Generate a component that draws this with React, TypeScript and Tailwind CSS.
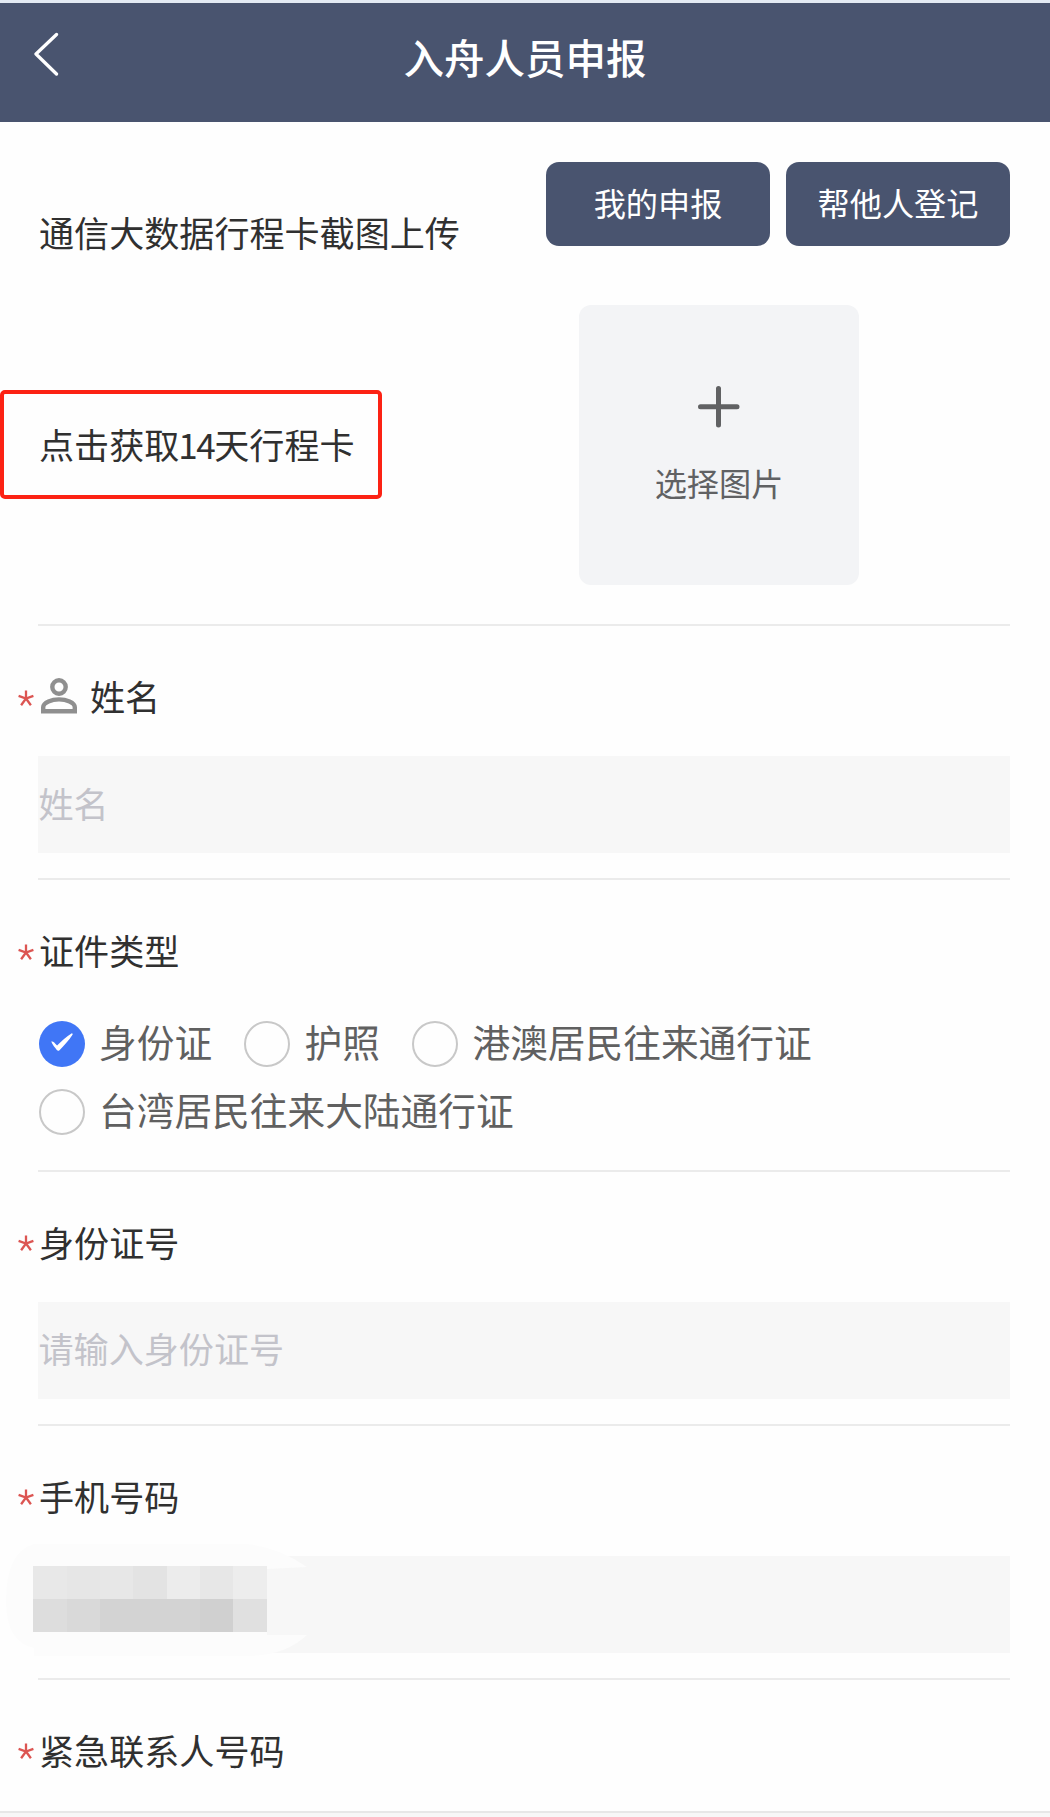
import type { ReactNode } from 'react';

const MOSAIC = [
  ['#e8e8e8', '#e6e6e6', '#e7e7e7', '#e3e3e3', '#ececec', '#e7e7e7', '#ededed'],
  ['#dddddd', '#d9d9d9', '#d3d3d3', '#d3d3d3', '#d3d3d3', '#d0d0d0', '#e0e0e0'],
];

function Label({ children, icon }: { children: ReactNode; icon?: ReactNode }) {
  return (
    <div className="flex h-[50px] items-center">
      <svg className="ml-[18px] mr-[5px] shrink-0" width="16" height="17" viewBox="0 0 16 17" fill="none" stroke="#dc5552" strokeWidth="2.3">
        <path d="M8 .5V8.5M.6 5.8 8 8.5l7.4-2.7M8 8.5 3.1 15.2M8 8.5l4.9 6.7" />
      </svg>
      {icon}
      <span className="-mt-[4px] text-[35.1px] leading-[50px] text-[#303030]">{children}</span>
    </div>
  );
}

function PersonIcon() {
  return (
    <svg className="-mt-[5px] ml-[2px] mr-[13px] shrink-0" width="36" height="36" viewBox="0 0 36 36" fill="none" stroke="#8f8f8f" strokeWidth="4.4">
      <circle cx="18" cy="9" r="6.7" />
      <path d="M2.2 33.3v-4c0-5.1 8.800-7.900 15.800-7.900s15.800 2.800 15.800 7.900v4z" />
    </svg>
  );
}

function Divider() {
  return <div className="ml-[38px] mr-[40px] h-[2px] shrink-0 bg-[#ebebeb]" />;
}

function Field({ label, icon, placeholder, children }: { label: string; icon?: ReactNode; placeholder?: string; children?: ReactNode }) {
  return (
    <section className="h-[254px] pt-[47px]">
      <Label icon={icon}>{label}</Label>
      <div className="relative ml-[38px] mr-[40px] mt-[33px] flex h-[97px] items-center bg-[#f7f7f7]">
        <span className="-mt-[4px] ml-[0.5px] text-[35.1px] leading-[50px] text-[#c3c3ca]">{placeholder}</span>
        {children}
      </div>
      <div className="h-[25px]" />
      <Divider />
    </section>
  );
}

function Radio({ label, checked }: { label: string; checked?: boolean }) {
  return (
    <div className="flex h-[46px] items-center">
      {checked ? (
        <svg width="46" height="46" viewBox="0 0 46 46">
          <circle cx="23" cy="23" r="23" fill="#4076f6" />
          <path d="M12.2 20.6c1.500-.8 3.200.6 5.900 4 4.400-4.300 9.200-9 14.700-12.300.9.2 1.100.7.700 1.500-3.800 5.700-8.200 10.600-13 15.400-.9.8-1.900.7-2.700-.2-2-2.300-4-4.900-5.600-8.400z" fill="#fff" />
        </svg>
      ) : (
        <span className="size-[46px] rounded-full border-[2.5px] border-[#c8c8c8]" />
      )}
      <span className="-mt-[6px] ml-[14.500px] text-[37.7px] leading-[46px] text-[#606060]">{label}</span>
    </div>
  );
}

function MaskedNumber() {
  return (
    <>
      <svg className="absolute -left-[33px] -top-[12px]" width="302" height="114" viewBox="0 0 302 114">
        <path d="M29 0H242Q275 4 302 23L262 25V91L302 91Q280 112 242 112H29V104Q1 98 1 57Q1 8 29 0Z" fill="#fcfcfc" />
      </svg>
      <div className="absolute -left-[4.700px] top-[10px] grid grid-cols-[repeat(7,33.33px)] grid-rows-[repeat(2,33.33px)]">
        {MOSAIC.flat().map((color, i) => (
          <span key={i} style={{ backgroundColor: color }} />
        ))}
      </div>
    </>
  );
}

export default function App() {
  return (
    <div className="flex h-[1817px] w-[1050px] flex-col overflow-hidden bg-[#fefefe] font-['Noto_Sans_CJK_SC',sans-serif]">
      <div className="h-[3px] shrink-0 bg-[#e3eaf3]" />
      <header className="grid h-[118.5px] shrink-0 grid-cols-[80px_1fr_80px] bg-[#49546f]">
        <svg className="ml-[34px] mt-[29px]" width="26" height="44" viewBox="0 0 26 44" fill="none" stroke="#fff" strokeWidth="3.3" strokeLinecap="round" strokeLinejoin="round">
          <path d="M22.5 2.5 2 22l20.5 20" />
        </svg>
        <h1 className="mt-[24px] text-center text-[40.5px] font-medium leading-[60px] text-white">入舟人员申报</h1>
      </header>

      <section className="h-[502.5px] shrink-0">
        <div className="flex h-[183.5px] pl-[39px] pr-[40px] pt-[40.5px]">
          <div className="mt-[45px] flex-1 text-[35.1px] leading-[50px] text-[#303030]">通信大数据行程卡截图上传</div>
          <div className="flex gap-[16px] text-[32.2px] leading-[80px] text-white">
            <button className="h-[84px] w-[224px] rounded-[13px] bg-[#49546f] pb-1">我的申报</button>
            <button className="h-[84px] w-[224px] rounded-[13px] bg-[#49546f] pb-1">帮他人登记</button>
          </div>
        </div>
        <div className="flex items-center">
          <div className="-mt-[2px] flex h-[109px] w-[382px] items-center rounded-[5px] border-[4.5px] border-[#fc2214] pl-[35px] text-[35.1px] leading-[50px] text-[#303030]">
            点击获取<span className="-ml-px tracking-[-1.5px]">14</span>天行程卡
          </div>
          <div className="ml-[197px] flex size-[280px] flex-col items-center rounded-[12px] bg-[#f3f4f6] pt-[80.500px]">
            <svg width="42" height="42" viewBox="0 0 42 42" fill="none" stroke="#606163" strokeWidth="5" strokeLinecap="round">
              <path d="M20.5 2.500v36.500M2.500 20.800h36.500" />
            </svg>
            <span className="mt-[29.500px] text-[32.2px] leading-[50px] text-[#606163]">选择图片</span>
          </div>
        </div>
      </section>
      <Divider />

      <main className="min-h-0 flex-1 overflow-hidden">
        <Field label="姓名" icon={<PersonIcon />} placeholder="姓名" />

        <section className="h-[291.5px] pt-[47px]">
          <Label>证件类型</Label>
          <div className="ml-[38.5px] mt-[44px] flex flex-wrap gap-x-[32px] gap-y-[22px]">
            <Radio label="身份证" checked />
            <Radio label="护照" />
            <Radio label="港澳居民往来通行证" />
            <Radio label="台湾居民往来大陆通行证" />
          </div>
          <div className="h-[34.5px]" />
          <Divider />
        </section>

        <Field label="身份证号" placeholder="请输入身份证号" />
        <Field label="手机号码">
          <MaskedNumber />
        </Field>
        <div className="pt-[47px]">
          <Label>紧急联系人号码</Label>
        </div>
      </main>
      <footer className="h-[6px] shrink-0 border-t-2 border-[#e7e7e7] bg-[#f7f7f7]" />
    </div>
  );
}
